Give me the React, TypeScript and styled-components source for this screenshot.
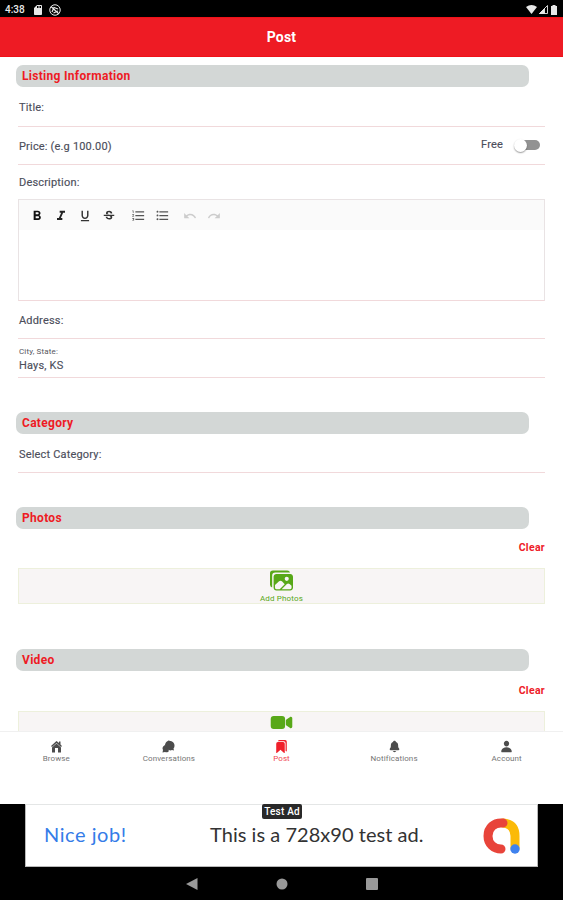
import React from 'react';
import styled, { createGlobalStyle } from 'styled-components';
import {
  MdFormatBold, MdFormatItalic, MdFormatUnderlined, MdStrikethroughS,
  MdFormatListNumbered, MdFormatListBulleted, MdUndo, MdRedo, MdSdCard,
} from 'react-icons/md';
import { IoBookmarks, IoPerson, IoNotifications, IoImages, IoVideocam } from 'react-icons/io5';

const GlobalStyle = createGlobalStyle`
  * { box-sizing: border-box; }
  body { margin: 0; background: #000; font-family: Roboto, sans-serif; overflow: hidden; }
  svg { display: block; }
`;

const Screen = styled.div`
  width: 563px;
  height: 900px;
  display: flex;
  flex-direction: column;
  overflow: hidden;
  background: #000;
`;

const StatusBar = styled.div`
  flex: none;
  height: 17px;
  padding: 2px 5px 0 5px;
  display: flex;
  align-items: center;
  justify-content: space-between;
  color: #e8e8e8;
`;

const StatusGroup = styled.div<{ $gap: number }>`
  display: flex;
  align-items: center;
  gap: ${(p) => p.$gap}px;
`;

const Clock = styled.span`
  width: 20px;
  margin-right: 2px;
  font-size: 10px;
  font-weight: 500;
  line-height: 12px;
`;

const Header = styled.header`
  flex: none;
  height: 40px;
  background: #ee1b24;
  border-top: 1px solid #f01118;
  border-bottom: 1px solid #f01118;
  color: #fff;
  font-size: 14px;
  font-weight: 700;
  line-height: 39px;
  text-align: center;
  letter-spacing: 0.2px;
`;

const Content = styled.main`
  flex: none;
  height: 674px;
  padding-top: 8px;
  background: #fff;
  overflow: hidden;
`;

const SectionTitle = styled.h2`
  width: 513px;
  height: 22px;
  margin: 0 0 0 16px;
  padding-left: 6px;
  border-radius: 7px;
  background: #d3d7d6;
  color: #ee1b24;
  font-size: 12px;
  font-weight: 700;
  line-height: 22px;
  letter-spacing: 0.3px;
`;

const Field = styled.div<{ $height: number; $top: number; $line?: boolean; $gap?: number }>`
  height: ${(p) => p.$height}px;
  margin: 0 18px ${(p) => p.$gap ?? 0}px;
  padding: ${(p) => p.$top}px 0 0 1px;
  border-bottom: ${(p) => (p.$line ? '1px solid #f1d9db' : '0')};
  display: flex;
  justify-content: space-between;
`;

const Label = styled.label`
  color: #4c4e5b;
  font-size: 11px;
  line-height: 14px;
  letter-spacing: 0.18px;
  -webkit-text-stroke: 0.15px currentColor;
`;

const Stack = styled.div`
  display: flex;
  flex-direction: column;
`;

const SmallLabel = styled.label`
  height: 12px;
  color: #55555d;
  font-size: 8px;
  line-height: 10px;
  letter-spacing: 0.15px;
`;

const SwitchGroup = styled.div`
  display: flex;
  align-items: center;
  height: 14px;
  gap: 11px;
  margin-top: -2px;
  padding-right: 5px;
`;

const Track = styled.span`
  width: 26px;
  height: 14px;
  display: flex;
  align-items: center;
  &::before {
    content: '';
    width: 13px;
    height: 13px;
    border-radius: 50%;
    background: #fff;
    box-shadow: 0 1px 1.5px rgba(0, 0, 0, 0.4);
    z-index: 1;
  }
  &::after {
    content: '';
    width: 19px;
    height: 10px;
    margin-left: -6px;
    border-radius: 5px;
    background: #929292;
  }
`;

const Editor = styled.div`
  height: 102px;
  margin: 0 18px;
  border: 1px solid #e9e3e4;
  border-bottom-color: #f1d9db;
`;

const Toolbar = styled.div`
  height: 30px;
  padding: 1px 0 0 11px;
  display: flex;
  align-items: center;
  background: #fafafa;
`;

const Tool = styled.span<{ $tone?: string; $after?: number; $size?: number }>`
  width: 14px;
  height: 14px;
  margin-right: ${(p) => p.$after ?? 10}px;
  display: flex;
  align-items: center;
  justify-content: center;
  color: ${(p) => p.$tone ?? '#333'};
  font-size: ${(p) => p.$size ?? 16}px;
  svg { flex: none; }
`;

const ClearRow = styled.div<{ $top?: number }>`
  height: ${(p) => 27 + (p.$top ?? 12)}px;
  padding: ${(p) => p.$top ?? 12}px 18px 0;
  color: #ee2028;
  font-size: 10.5px;
  font-weight: 700;
  line-height: 14px;
  text-align: right;
  letter-spacing: 0.3px;
`;

const UploadBox = styled.div<{ $gap?: number }>`
  height: 36px;
  margin: 0 18px ${(p) => p.$gap ?? 0}px;
  display: flex;
  flex-direction: column;
  align-items: center;
  background: #f8f5f5;
  border: 1px solid #edf0dc;
  color: #58a818;
  font-size: 23px;
`;

const VideoIcon = styled(IoVideocam)`
  margin-top: -1px;
`;

const UploadText = styled.span`
  margin-top: 2px;
  font-size: 8px;
  line-height: 9px;
  letter-spacing: 0.15px;
`;

const TabBar = styled.nav`
  flex: none;
  height: 73px;
  padding-top: 8px;
  display: grid;
  grid-template-columns: repeat(5, 1fr);
  align-items: start;
  background: #fff;
  border-top: 1px solid #f0f0f0;
`;

const Tab = styled.div<{ $active?: boolean }>`
  display: flex;
  flex-direction: column;
  align-items: center;
  color: ${(p) => (p.$active ? '#f01f2a' : '#4c4c4c')};
  font-size: 13px;
`;

const TabText = styled.span<{ $active?: boolean }>`
  color: ${(p) => (p.$active ? '#f04a52' : '#757575')};
  font-size: 8px;
  line-height: 12px;
  letter-spacing: 0.1px;
`;

const Ad = styled.div`
  position: relative;
  flex: none;
  width: 513px;
  height: 63px;
  margin-left: 25px;
  display: flex;
  align-items: center;
  background: #fff;
  border: 1px solid #b9b9b9;
  border-top-color: #e4e6e6;
  font-family: Lato, sans-serif;
`;

const AdTag = styled.span`
  position: absolute;
  left: 236px;
  top: -1px;
  width: 40px;
  height: 15px;
  border-radius: 2px;
  background: #292929;
  color: #fff;
  font-family: Roboto, sans-serif;
  font-size: 10px;
  font-weight: 500;
  line-height: 15px;
  text-align: center;
  letter-spacing: 0.2px;
  white-space: nowrap;
`;

const AdHeadline = styled.span`
  width: 166px;
  padding: 0 0 4px 18px;
  color: #347ce8;
  font-size: 20px;
  letter-spacing: 0.55px;
`;

const AdText = styled.span`
  flex: 1;
  padding: 0 0 4px 18px;
  color: #333;
  font-size: 20px;
  letter-spacing: 0.04px;
  white-space: nowrap;
`;

const AdLogo = styled.svg`
  margin-right: 15px;
`;

const SystemNav = styled.div`
  flex: none;
  height: 33px;
  display: flex;
  align-items: center;
  justify-content: center;
  gap: 78px;
  color: #999;
`;

const HomeIcon = () => (
  <svg width="13" height="13" viewBox="0 0 26 26" fill="currentColor">
    <path d="M13 2 2 12l2 2 9-8 9 8 2-2-3-3V3h-3v3z" />
    <path d="M13 7 4 15v10h6v-9h6v9h6V15z" />
  </svg>
);

const ChatIcon = () => (
  <svg width="13" height="13" viewBox="0 0 26 26" fill="currentColor">
    <path d="M15 2c6 0 10 4 10 9 0 3-1 5-2 6l1 4-4-1c-2 1-4 1-6 0-4 0-8-4-8-9s4-10 9-10z" />
    <path d="M6 10c-3 2-5 4-5 7l1 3-1 5 5-1c3 1 6 1 8-2z" />
  </svg>
);

const tabs = [
  { name: 'Browse', icon: <HomeIcon /> },
  { name: 'Conversations', icon: <ChatIcon /> },
  { name: 'Post', icon: <IoBookmarks />, active: true },
  { name: 'Notifications', icon: <IoNotifications /> },
  { name: 'Account', icon: <IoPerson /> },
];

export default function App() {
  return (
    <Screen>
      <GlobalStyle />
      <StatusBar>
        <StatusGroup $gap={5}>
          <Clock>4:38</Clock>
          <MdSdCard size={12} />
          <svg width="12" height="12" viewBox="0 0 24 24" fill="none" stroke="currentColor" strokeWidth="2">
            <circle cx="12" cy="12" r="10.5" />
            <path d="m4 5 16 15M6 16l4-9 8 3M9 18l9-4" strokeWidth="2.4" />
          </svg>
        </StatusGroup>
        <StatusGroup $gap={2}>
          <svg width="11" height="9" viewBox="0 0 22 18" fill="currentColor">
            <path d="M0 4Q11-4 22 4L11 18z" />
          </svg>
          <svg width="9" height="9" viewBox="0 0 18 18" fill="none" stroke="currentColor" strokeWidth="1.8">
            <path d="M17 1v16H1z" />
            <path d="M11 7v10H1z" fill="currentColor" />
          </svg>
          <svg width="8" height="10" viewBox="0 0 16 20" fill="currentColor">
            <path d="M5 0h6v2h3v18H2V2h3z" />
          </svg>
        </StatusGroup>
      </StatusBar>
      <Header>Post</Header>
      <Content>
        <SectionTitle>Listing Information</SectionTitle>
        <Field $height={40} $top={14} $line><Label>Title:</Label></Field>
        <Field $height={38} $top={13} $line>
          <Label>Price: (e.g 100.00)</Label>
          <SwitchGroup>
            <Label>Free</Label>
            <Track />
          </SwitchGroup>
        </Field>
        <Field $height={34} $top={11}><Label>Description:</Label></Field>
        <Editor>
          <Toolbar>
            <Tool $tone="#111"><MdFormatBold /></Tool>
            <Tool $tone="#222"><MdFormatItalic /></Tool>
            <Tool $size={14}><MdFormatUnderlined /></Tool>
            <Tool $after={15} $size={14}><MdStrikethroughS /></Tool>
            <Tool $tone="#555" $size={15}><MdFormatListNumbered /></Tool>
            <Tool $tone="#555" $after={14} $size={15}><MdFormatListBulleted /></Tool>
            <Tool $tone="#ccc" $size={14}><MdUndo /></Tool>
            <Tool $tone="#ccc" $size={14}><MdRedo /></Tool>
          </Toolbar>
        </Editor>
        <Field $height={38} $top={13} $line><Label>Address:</Label></Field>
        <Field $height={39} $top={8} $line $gap={34}>
          <Stack>
            <SmallLabel>City, State:</SmallLabel>
            <Label>Hays, KS</Label>
          </Stack>
        </Field>
        <SectionTitle>Category</SectionTitle>
        <Field $height={39} $top={14} $line $gap={34}><Label>Select Category:</Label></Field>
        <SectionTitle>Photos</SectionTitle>
        <ClearRow>Clear</ClearRow>
        <UploadBox $gap={45}>
          <IoImages />
          <UploadText>Add Photos</UploadText>
        </UploadBox>
        <SectionTitle>Video</SectionTitle>
        <ClearRow $top={13}>Clear</ClearRow>
        <UploadBox><VideoIcon /></UploadBox>
      </Content>
      <TabBar>
        {tabs.map((tab) => (
          <Tab key={tab.name} $active={tab.active}>
            {tab.icon}
            <TabText $active={tab.active}>{tab.name}</TabText>
          </Tab>
        ))}
      </TabBar>
      <Ad>
        <AdTag>Test Ad</AdTag>
        <AdHeadline>Nice job!</AdHeadline>
        <AdText>This is a 728x90 test ad.</AdText>
        <AdLogo width="40" height="38" viewBox="0 0 40 38" fill="none" strokeWidth="9" strokeLinecap="round">
          <path d="M21 6q12 1 12 13v12" stroke="#fbba08" />
          <path d="M21 6C12 5 6 11 6 19s6 13 13 13" stroke="#e8443a" />
          <circle cx="33" cy="32" r="4.7" fill="#3f82ee" />
        </AdLogo>
      </Ad>
      <SystemNav>
        <svg width="12" height="12" viewBox="0 0 12 12" fill="currentColor"><path d="M11.5 0v12L0 6z" /></svg>
        <svg width="12" height="12" viewBox="0 0 12 12" fill="currentColor"><circle cx="6" cy="6" r="5.5" /></svg>
        <svg width="12" height="12" viewBox="0 0 12 12" fill="currentColor"><rect width="12" height="12" rx="1" /></svg>
      </SystemNav>
    </Screen>
  );
}
